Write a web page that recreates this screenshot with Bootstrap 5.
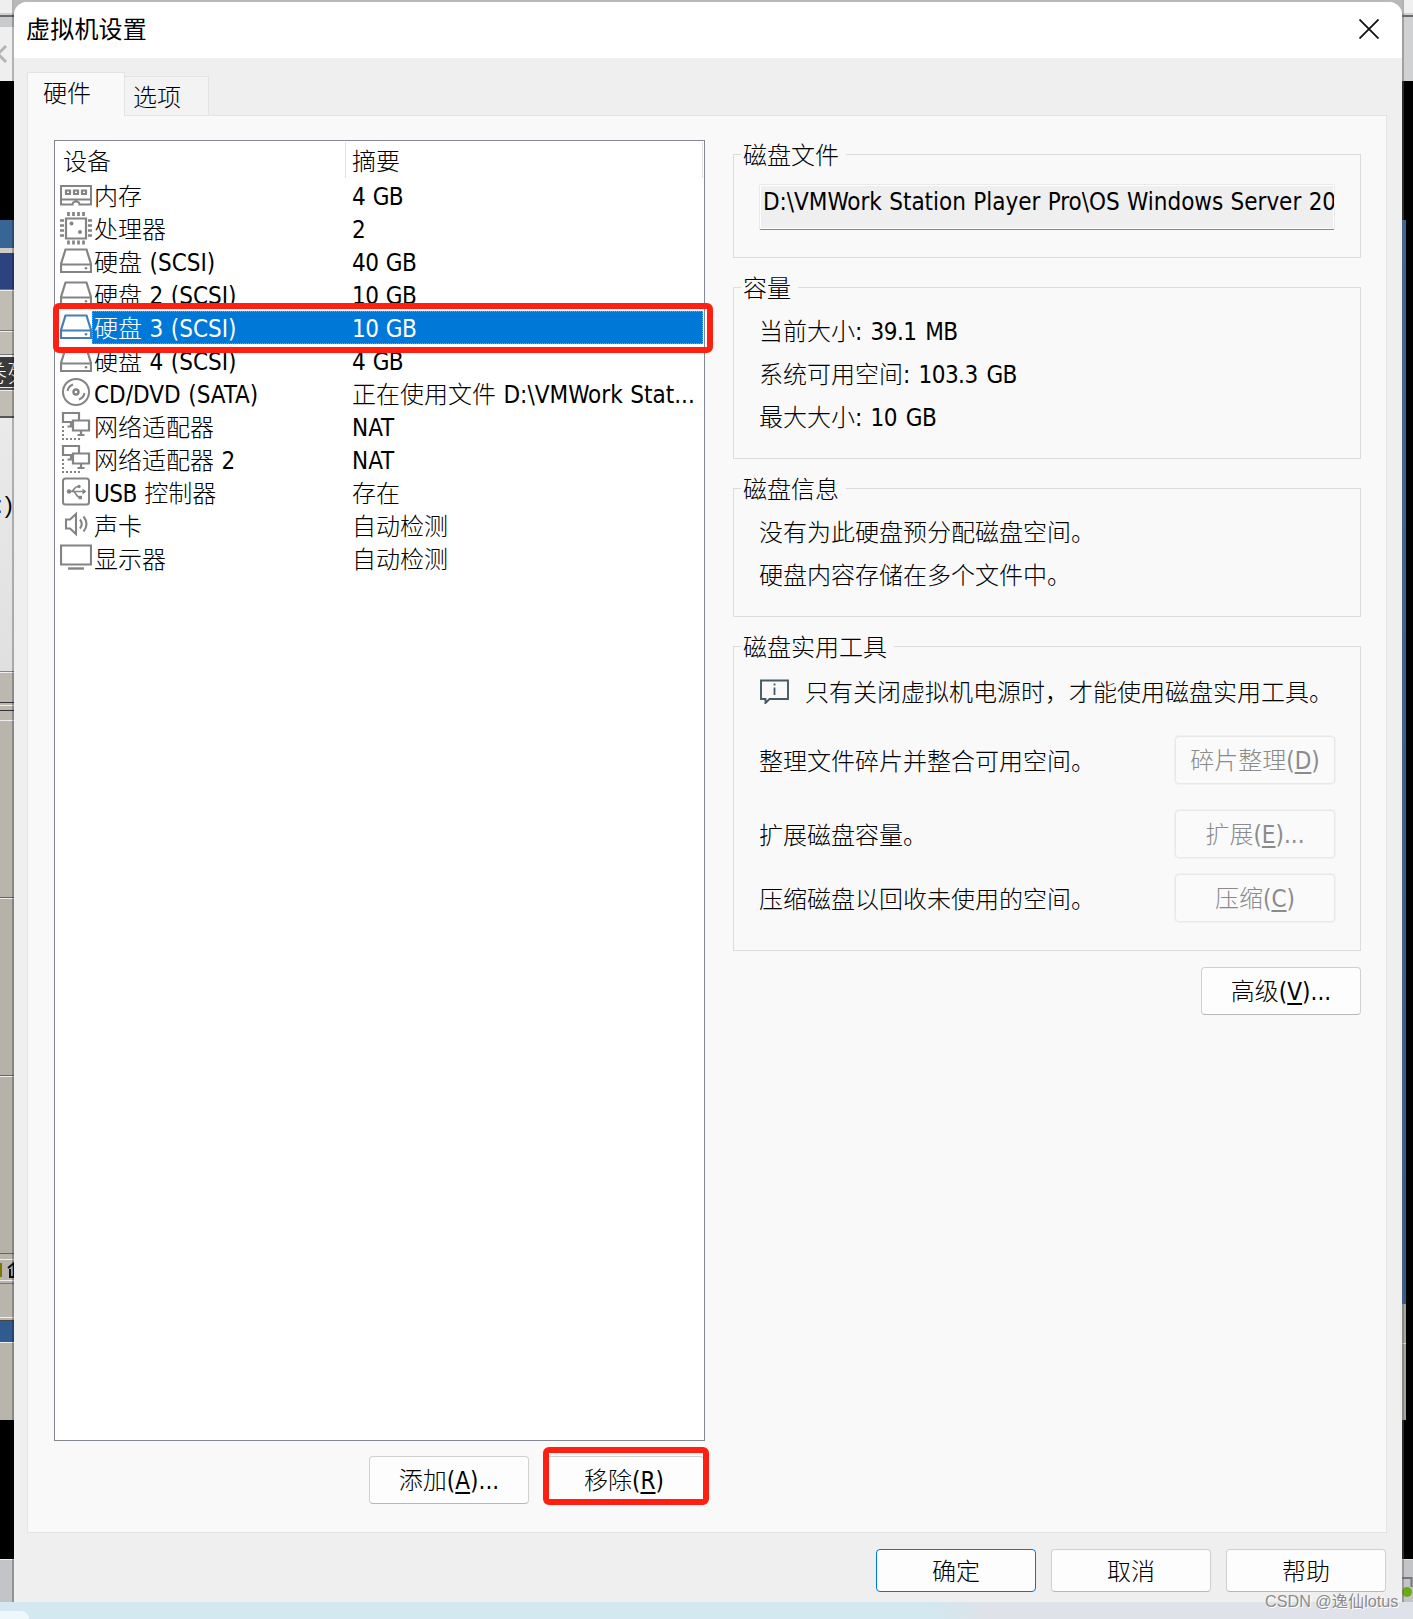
<!DOCTYPE html>
<html lang="zh-CN">
<head>
<meta charset="utf-8">
<meta name="viewport" content="width=device-width, initial-scale=1">
<title>虚拟机设置</title>
<link href="https://cdn.jsdelivr.net/npm/bootstrap@5.3.0/dist/css/bootstrap.min.css" rel="stylesheet">
<style>
body{width:1413px;height:1619px;overflow:hidden;background:#dfe2e8;color:#000;font:300 24px/30px "DejaVu Sans Condensed","Noto Sans CJK SC",sans-serif}
.lt{letter-spacing:.02px;word-spacing:.6px;font-weight:400}
.num{letter-spacing:-.55px;word-spacing:1.2px;font-weight:400}
.gap-sp{word-spacing:2.500px}
.edge-left,.edge-right{height:1602px;position:relative;overflow:hidden;flex:none}
.edge-left{width:14px;background:linear-gradient(#efefef 0 13px,#cfcfcf 13px 15px,#6a6a6a 15px 17px,#c8cacc 17px 27px,#efefef 27px 81px,#000 81px 220px,#376696 220px 248px,#cfcbc5 248px 253px,#2b4480 253px 289px,#777 289px 290px,#eee 290px 291px,#c1bcb4 291px 330px,#777 330px 331px,#eee 331px 332px,#c1bcb4 332px 354px,#777 354px 355px,#eee 355px 357px,#3a3a3a 357px 387px,#eee 387px 388px,#555 388px 390px,#eee 390px 391px,#c1bcb4 391px 416px,#555 416px 418px,#eaeaea 418px,#e0e0e0 671px,#888 671px 672px,#eee 672px 673px,#bcb8b0 673px 702px,#333 702px 703px,#bcb8b0 703px 705px,#eee 705px 706px,#bcb8b0 706px 710px,#333 710px 711px,#bcb8b0 711px 720px,#eee 720px 721px,#b9b5ad 721px 897px,#666 897px 898px,#eee 898px 899px,#b6b2aa 899px 1075px,#666 1075px 1076px,#eee 1076px 1077px,#b6b2aa 1077px 1253px,#666 1253px 1254px,#b9b5ad 1254px 1259px,#eee 1259px 1260px,#b9b5ad 1260px 1280px,#eee 1280px 1281px,#b9b5ad 1281px 1283px,#777 1283px 1284px,#b9b5ad 1284px 1317px,#eee 1317px 1318px,#b9b5ad 1318px 1320px,#444 1320px 1321px,#2f5b8f 1321px 1342px,#eee 1342px 1343px,#b9b5ad 1343px 1420px,#000 1420px 1559px,#eee 1559px 1560px,#c2c4c7 1560px)}
.edge-right{width:11px;background:linear-gradient(#f0f0f0 0 13px,#cfcfcf 13px 15px,#6a6a6a 15px 17px,#d0d1d3 17px 81px,#000 81px 1559px,#ddd 1559px 1560px,#c2c4c7 1560px)}
.edge-left::after{content:"";position:absolute;inset:0 0 0 auto;width:2px;background:rgba(0,0,0,.25)}
.edge-right::before{content:"";position:absolute;left:0;top:220px;width:4px;height:1200px;background:linear-gradient(#3a689a 0,#2f5b8f 1084px,#a6a49f 1084px 1123px,#ddd 1123px 1124px,#a6a49f 1124px)}
.edge-right::after{content:"";position:absolute;inset:0 auto 0 0;width:2px;background:rgba(100,100,100,.45)}
.bg-bit{position:absolute;white-space:nowrap}
.dlg-wrap{width:1388px;height:1602px;padding-top:2px;background:linear-gradient(#b9b9b9 0 40px,#efefef 40px)}
.dlg{height:1600px;background:#efefef;border-radius:13px 13px 12px 12px;overflow:hidden}
.dlg-title{height:56px;background:#fff;padding:0 23px 0 12px;font-weight:400;letter-spacing:.2px}
.dlg-title svg{margin-bottom:2px}
.tabs{height:57px;padding-left:13px}
.tab-on,.tab-off{border:1px solid #e3e3e3;border-bottom:0}
.tab-on{width:98px;height:44px;margin-bottom:-1px;background:#f9f9f9;padding:6px 0 0 15px;position:relative;z-index:1}
.tab-off{width:84px;height:39px;background:#f3f3f3;padding:6px 0 0 8px;border-left:0}
.pane{width:1360px;height:1418px;margin-left:13px;background:#f9f9f9;border:1px solid #e3e3e3;padding:24px 25px 0 26px}
.dev{width:651px;height:1301px;border:1px solid #83878e;background:#fff}
.dev-head{height:38px;padding-top:1px}
.dev-head div{height:36px;padding-top:5px;border-right:1px solid #e3e3e3}
.h1c{width:291px;padding-left:8px}
.h2c{width:357px;padding-left:6px}
.dev-row{height:33px;padding-left:5px;line-height:37px}
.dev-row svg{width:32px;height:33px;flex:none;color:#848484}
.dev-row .cells{width:611px;height:33px;padding-left:2px}
.dev-row .nm{width:258px;white-space:nowrap}
.dev-row .sm{white-space:nowrap}
.sel .cells{background:#0078d7;color:#fff;outline:1px dotted #e08a3a;outline-offset:-1px}
.sel svg{color:#4480b4}
.mark-red{position:absolute;border:6px solid #ff2012;border-radius:6px;z-index:3}
.mr1{left:-1px;top:163px;width:660px;height:50px}
.mr2{left:-1px;top:-9px;width:166px;height:58px}
.wbtn{width:160px;height:48px;background:#fdfdfd;border:1px solid #d0d0d0;border-bottom-color:#b8b8b8;border-radius:4px;padding:0;font:inherit;color:#000;line-height:48px;text-align:center}
.wbtn:disabled{border-color:#e8e8e8;color:#8b8b8b;background:#fafafa;opacity:1;box-shadow:0 0 0 1px #f1f1f1}
.wbtn u{text-underline-offset:3px;text-decoration-thickness:2px}
.foot .wbtn{height:43px;line-height:44px}
.foot{gap:15px;padding:16px 16px 0 0}
.foot .ok{border-color:#0078d7}
.right{width:628px}
.grp{border:1px solid #dcdcdc;padding:0 25px 0 25px;margin:0;position:relative}
.grp legend{float:none;width:auto;margin:0 0 0 -18px;padding:4px 7px 0 2px;font:inherit;line-height:26px}
.path-box{height:46px;margin-top:15px;background:#efefef;border:1px solid #e9e9e9;border-bottom:1px solid #858585;overflow:hidden;white-space:nowrap;padding:2px 0 0 3px;border-radius:2px;width:576px;box-shadow:inset 0 0 0 1px #fff}
.path-box .lt{letter-spacing:-.03px}
.ln{height:43px;line-height:43px;white-space:nowrap}
.util{padding-left:1px;white-space:nowrap}
.util>span{padding-top:3px}
.wm{position:absolute;left:1265px;top:1588px;font:16.2px/26px "Liberation Sans","Noto Sans CJK SC",sans-serif;color:#8c8c8c;text-shadow:1px 1px 0 #fff;white-space:nowrap}
.taskbar{height:17px;background:linear-gradient(90deg,#d3e8f1 0 930px,#dfe2e8 990px);position:relative}
.taskbar i{position:absolute;left:0;top:9px;width:29px;height:8px;background:#eef7fb;border-radius:0 8px 0 0}
</style>
</head>
<body>
<svg width="0" height="0" class="position-absolute">
<defs>
<symbol id="i-mem" viewBox="0 0 32 33"><path d="M1 7h30v18.500H19.500a3.500 3 0 0 0-7 0H1zM1 20.500h30" fill="none" stroke="currentColor" stroke-width="2"/><path d="M6 11.500h4v3.500H6zM14 11.500h4v3.500h-4zM22 11.500h4v3.500h-4z" fill="none" stroke="currentColor" stroke-width="2.200"/></symbol>
<symbol id="i-cpu" viewBox="0 0 32 33"><path d="M6 6.500h20v20H6z" fill="none" stroke="currentColor" stroke-width="2.200"/><path d="M8.500 0v4M13.500 0v4M18.500 0v4M23.500 0v4M8.500 28.500v4M13.500 28.500v4M18.500 28.500v4M23.500 28.500v4M0 8.500h4M0 13.500h4M0 18.500h4M0 23.500h4M28 8.500h4M28 13.500h4M28 18.500h4M28 23.500h4" stroke="currentColor" stroke-width="2.700"/><circle cx="11.500" cy="11.500" r="2" fill="currentColor"/><circle cx="20" cy="20" r="2" fill="currentColor"/></symbol>
<symbol id="i-hdd" viewBox="0 0 32 33"><path d="M1 19 5.500 4.500h21L31 19V27H1zM1 19.500h30" fill="#fff" stroke="currentColor" stroke-width="2.200"/><circle cx="26" cy="23.300" r="1.300" fill="currentColor"/></symbol>
<symbol id="i-cd" viewBox="0 0 32 33"><g fill="none" stroke="currentColor" stroke-width="2"><circle cx="16" cy="15" r="13"/><circle cx="16" cy="15" r="2.500" stroke-width="2.400"/><path d="M7.500 14a8.500 8.500 0 0 1 5.500-6.500M24.500 16a8.500 8.500 0 0 1-5.500 6.500"/></g></symbol>
<symbol id="i-net" viewBox="0 0 32 33"><g fill="none" stroke="currentColor" stroke-width="2.200"><path d="M12 12H3V3h16v7M7.500 16.500H12M11 12v4.500M13 10.500h16v10H13zM21 20.500v4.500M17.500 25h7"/><path d="M3 16v13" stroke-width="2" stroke-dasharray="2 2"/><path d="M2 29h18" stroke-width="2" stroke-dasharray="2 2"/></g></symbol>
<symbol id="i-usb" viewBox="0 0 32 33"><rect x="3" y="2.500" width="26" height="26" rx="2.500" fill="none" stroke="currentColor" stroke-width="2"/><path d="M8 15.500h16M11 15.500c3 0 3-5 7-5M13 15.500c3 0 3 6 7 6" fill="none" stroke="currentColor" stroke-width="1.700"/><circle cx="9" cy="15.500" r="2.200" fill="currentColor"/><path d="M22.500 12.500v6l4-3z" fill="currentColor"/><circle cx="19" cy="10.500" r="1.700" fill="currentColor"/><path d="M18.500 19.800h3.500v3.400h-3.500z" fill="currentColor"/></symbol>
<symbol id="i-snd" viewBox="0 0 32 33"><path d="M6 10.500h4l6-5.500v20l-6-5.500H6zM20 10.500q3.500 4.500 0 9M23.500 7.500q6 7.500 0 15" fill="none" stroke="currentColor" stroke-width="2.100"/></symbol>
<symbol id="i-dsp" viewBox="0 0 32 33"><path d="M1 3.500h30v19H1z" fill="none" stroke="currentColor" stroke-width="2.200"/><path d="M8 26.500h16" stroke="currentColor" stroke-width="2.400"/></symbol>
</defs>
</svg>
<div class="d-flex">
  <div class="edge-left">
    <svg class="bg-bit" style="left:0;top:44px" width="8" height="20"><path d="M6 2-2 10l8 8" fill="none" stroke="#b5b5b5" stroke-width="3"/></svg>
    <span class="bg-bit text-white" style="left:-17px;top:359px">卷列</span>
    <span class="bg-bit" style="left:-4px;top:490px;font-family:'Liberation Sans';letter-spacing:2px">:)</span>
    <svg class="bg-bit" style="left:0;top:1260px" width="14" height="20"><path d="M0 3h2v14H0z" fill="#7a7800"/><path d="M8 8 14 3v14h-4V9" fill="#90a8b0" stroke="#111" stroke-width="2"/></svg>
  </div>
  <div class="dlg-wrap">
    <main class="dlg">
      <header class="dlg-title d-flex align-items-center justify-content-between">
        <span>虚拟机设置</span>
        <svg width="20" height="20"><path d="m.500.500 19 19m0-19-19 19" stroke="#111" stroke-width="1.800"/></svg>
      </header>
      <nav class="tabs d-flex align-items-end">
        <div class="tab-on">硬件</div>
        <div class="tab-off">选项</div>
      </nav>
      <section class="pane d-flex justify-content-between align-items-start">
        <div class="position-relative">
          <div class="dev">
            <div class="dev-head d-flex"><div class="h1c">设备</div><div class="h2c">摘要</div></div>
            <div class="dev-row d-flex"><svg><use href="#i-mem"/></svg><div class="cells d-flex"><div class="nm">内存</div><div class="sm"><span class="num">4 GB</span></div></div></div>
            <div class="dev-row d-flex"><svg><use href="#i-cpu"/></svg><div class="cells d-flex"><div class="nm">处理器</div><div class="sm"><span class="num">2</span></div></div></div>
            <div class="dev-row d-flex"><svg><use href="#i-hdd"/></svg><div class="cells d-flex"><div class="nm">硬盘<span class="lt"> (SCSI)</span></div><div class="sm"><span class="num">40 GB</span></div></div></div>
            <div class="dev-row d-flex"><svg><use href="#i-hdd"/></svg><div class="cells d-flex"><div class="nm">硬盘<span class="lt"> 2 (SCSI)</span></div><div class="sm"><span class="num">10 GB</span></div></div></div>
            <div class="dev-row d-flex sel"><svg><use href="#i-hdd"/></svg><div class="cells d-flex"><div class="nm">硬盘<span class="lt"> 3 (SCSI)</span></div><div class="sm"><span class="num">10 GB</span></div></div></div>
            <div class="dev-row d-flex"><svg><use href="#i-hdd"/></svg><div class="cells d-flex"><div class="nm">硬盘<span class="lt"> 4 (SCSI)</span></div><div class="sm"><span class="num">4 GB</span></div></div></div>
            <div class="dev-row d-flex"><svg><use href="#i-cd"/></svg><div class="cells d-flex"><div class="nm"><span class="lt">CD/DVD (SATA)</span></div><div class="sm">正在使用文件<span class="lt"> D:\VMWork Stat...</span></div></div></div>
            <div class="dev-row d-flex"><svg><use href="#i-net"/></svg><div class="cells d-flex"><div class="nm">网络适配器</div><div class="sm"><span class="lt">NAT</span></div></div></div>
            <div class="dev-row d-flex"><svg><use href="#i-net"/></svg><div class="cells d-flex"><div class="nm">网络适配器<span class="lt"> 2</span></div><div class="sm"><span class="lt">NAT</span></div></div></div>
            <div class="dev-row d-flex"><svg><use href="#i-usb"/></svg><div class="cells d-flex"><div class="nm"><span class="num">USB </span>控制器</div><div class="sm">存在</div></div></div>
            <div class="dev-row d-flex"><svg><use href="#i-snd"/></svg><div class="cells d-flex"><div class="nm">声卡</div><div class="sm">自动检测</div></div></div>
            <div class="dev-row d-flex"><svg><use href="#i-dsp"/></svg><div class="cells d-flex"><div class="nm">显示器</div><div class="sm">自动检测</div></div></div>
          </div>
          <div class="mark-red mr1"></div>
          <div class="d-flex justify-content-end" style="gap:15px;padding:15px 1px 0 0">
            <button class="wbtn">添加<span class="lt">(<u>A</u>)...</span></button>
            <div class="position-relative"><button class="wbtn d-block">移除<span class="lt">(<u>R</u>)</span></button><div class="mark-red mr2"></div></div>
          </div>
        </div>
        <div class="right d-flex flex-column">
          <fieldset class="grp" style="height:119px;margin-top:-1px">
            <legend>磁盘文件</legend>
            <div class="path-box"><span class="lt">D:\VMWork Station Player Pro\OS Windows Server 20</span></div>
          </fieldset>
          <fieldset class="grp" style="height:187px;margin-top:14px">
            <legend>容量</legend>
            <div style="padding-top:9px">
              <div class="ln">当前大小<span class="num gap-sp">: 39.1 MB</span></div>
              <div class="ln">系统可用空间<span class="num gap-sp">: 103.3 GB</span></div>
              <div class="ln">最大大小<span class="num gap-sp">: 10 GB</span></div>
            </div>
          </fieldset>
          <fieldset class="grp" style="height:144px;margin-top:14px">
            <legend>磁盘信息</legend>
            <div style="padding-top:9px">
              <div class="ln">没有为此硬盘预分配磁盘空间。</div>
              <div class="ln">硬盘内容存储在多个文件中。</div>
            </div>
          </fieldset>
          <fieldset class="grp" style="height:320px;margin-top:14px">
            <legend>磁盘实用工具</legend>
            <div class="ln util d-flex align-items-center" style="margin:9px 0 23px">
              <svg width="29" height="25" style="margin-right:16px"><path d="M1 1.500h27v18.500H9.500L5.500 24v-4H1z" fill="none" stroke="#455a64" stroke-width="1.900"/><path d="M14.500 8.500v7.500M14.500 4.500v2" stroke="#455a64" stroke-width="1.800"/></svg>
              <span>只有关闭虚拟机电源时，才能使用磁盘实用工具。</span>
            </div>
            <div class="util ps-0 d-flex justify-content-between align-items-center" style="margin-bottom:26px"><span>整理文件碎片并整合可用空间。</span><button class="wbtn" disabled>碎片整理<span class="lt">(<u>D</u>)</span></button></div>
            <div class="util ps-0 d-flex justify-content-between align-items-center" style="margin-bottom:16px"><span>扩展磁盘容量。</span><button class="wbtn" disabled>扩展<span class="lt">(<u>E</u>)...</span></button></div>
            <div class="util ps-0 d-flex justify-content-between align-items-center"><span>压缩磁盘以回收未使用的空间。</span><button class="wbtn" disabled>压缩<span class="lt">(<u>C</u>)</span></button></div>
          </fieldset>
          <button class="wbtn align-self-end" style="margin-top:16px">高级<span class="lt">(<u>V</u>)...</span></button>
        </div>
      </section>
      <footer class="foot d-flex justify-content-end">
        <button class="wbtn ok">确定</button><button class="wbtn">取消</button><button class="wbtn">帮助</button>
      </footer>
    </main>
  </div>
  <div class="edge-right">
    <svg class="bg-bit" style="left:0;top:1575px" width="11" height="25"><path d="M0 3h9.500v9" fill="none" stroke="#777" stroke-width="2"/><circle cx="5" cy="17" r="5" fill="#6aaa14"/></svg>
  </div>
</div>
<div class="taskbar"><i></i></div>
<div class="wm">CSDN @逸仙lotus</div>
<script src="https://cdn.jsdelivr.net/npm/bootstrap@5.3.0/dist/js/bootstrap.bundle.min.js"></script>
</body>
</html>
